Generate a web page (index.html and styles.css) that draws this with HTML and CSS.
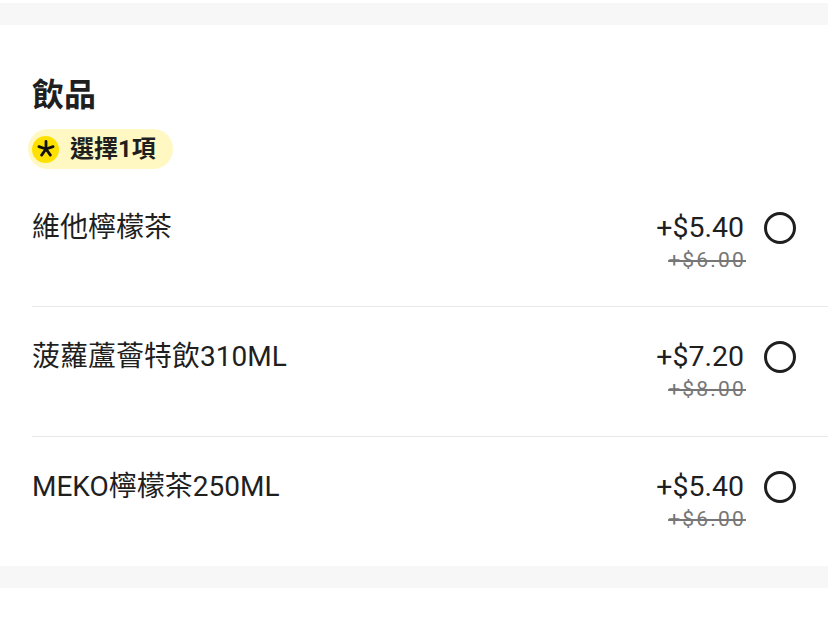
FILE: index.html
```html
<!DOCTYPE html>
<html lang="zh-Hant">
<head>
<meta charset="utf-8">
<link rel="stylesheet" href="styles.css">
</head>
<body>
<div class="band band-top"></div>
<section class="group">
  <h2 class="title">飲品</h2>
  <div class="badge">
    <span class="badge-dot">
      <svg width="18" height="18" viewBox="-9 -9 18 18">
        <g stroke="#111" stroke-width="2.8" stroke-linecap="round">
          <line x1="0" y1="0" x2="0" y2="-7.5"/>
          <line x1="0" y1="0" x2="7.1" y2="-2.3"/>
          <line x1="0" y1="0" x2="4.4" y2="6.1"/>
          <line x1="0" y1="0" x2="-4.4" y2="6.1"/>
          <line x1="0" y1="0" x2="-7.1" y2="-2.3"/>
        </g>
      </svg>
    </span>
    <span class="badge-text">選擇1項</span>
  </div>
  <ul class="options">
    <li class="option">
      <span class="name">維他檸檬茶</span>
      <div class="prices">
        <span class="price">+$5.40</span>
        <span class="old">+$6.00</span>
      </div>
      <span class="radio"></span>
    </li>
    <li class="option">
      <span class="name">菠蘿蘆薈特飲310ML</span>
      <div class="prices">
        <span class="price">+$7.20</span>
        <span class="old">+$8.00</span>
      </div>
      <span class="radio"></span>
    </li>
    <li class="option">
      <span class="name">MEKO檸檬茶250ML</span>
      <div class="prices">
        <span class="price">+$5.40</span>
        <span class="old">+$6.00</span>
      </div>
      <span class="radio"></span>
    </li>
  </ul>
</section>
<div class="band"></div>
</body>
</html>
```
FILE: styles.css
```css
html, body {
  margin: 0;
  padding: 0;
  background: #ffffff;
}
body {
  font-family: Roboto, "Noto Sans CJK TC", sans-serif;
  color: #1f1f1f;
  width: 828px;
  padding-top: 3px;
}
.band {
  height: 22px;
  background: #f7f7f7;
}
.group {
  padding: 51px 0 0 32px;
}
.title {
  margin: 0;
  font-size: 32px;
  line-height: 38px;
  font-weight: 700;
  color: #1f1f1f;
}
.badge {
  display: inline-flex;
  align-items: center;
  height: 40px;
  margin: 15px 0 0 -4px;
  padding: 0 17px 0 4px;
  border-radius: 20px;
  background: #fff8c2;
}
.badge-dot {
  width: 27px;
  height: 27px;
  border-radius: 50%;
  background: #ffe100;
  display: flex;
  align-items: center;
  justify-content: center;
}
.badge-dot svg {
  display: block;
}
.badge-text {
  margin-left: 11px;
  font-size: 24px;
  font-weight: 700;
  line-height: 30px;
  color: #1f1f1f;
}
.options {
  list-style: none;
  margin: 8px 0 0 0;
  padding: 0;
}
.option {
  display: flex;
  align-items: flex-start;
  padding: 32px 32px 33px 0;
  border-bottom: 1px solid #e8e8e8;
}
.option:first-child {
  padding-top: 33px;
  padding-bottom: 32px;
}
.option:last-child {
  border-bottom: none;
}
.name {
  flex: 1;
  font-size: 28px;
  line-height: 36px;
  color: #1f1f1f;
}
.prices {
  display: flex;
  flex-direction: column;
  align-items: flex-end;
}
.price {
  font-size: 28.5px;
  line-height: 36px;
  color: #1f1f1f;
}
.old {
  font-size: 21px;
  line-height: 28px;
  letter-spacing: 2.2px;
  margin-right: -2px;
  color: #767676;
  text-decoration: line-through;
}
.radio {
  box-sizing: border-box;
  width: 32px;
  height: 32px;
  margin: 2px 0 0 20px;
  border: 3px solid #1f1f1f;
  border-radius: 50%;
}
```
